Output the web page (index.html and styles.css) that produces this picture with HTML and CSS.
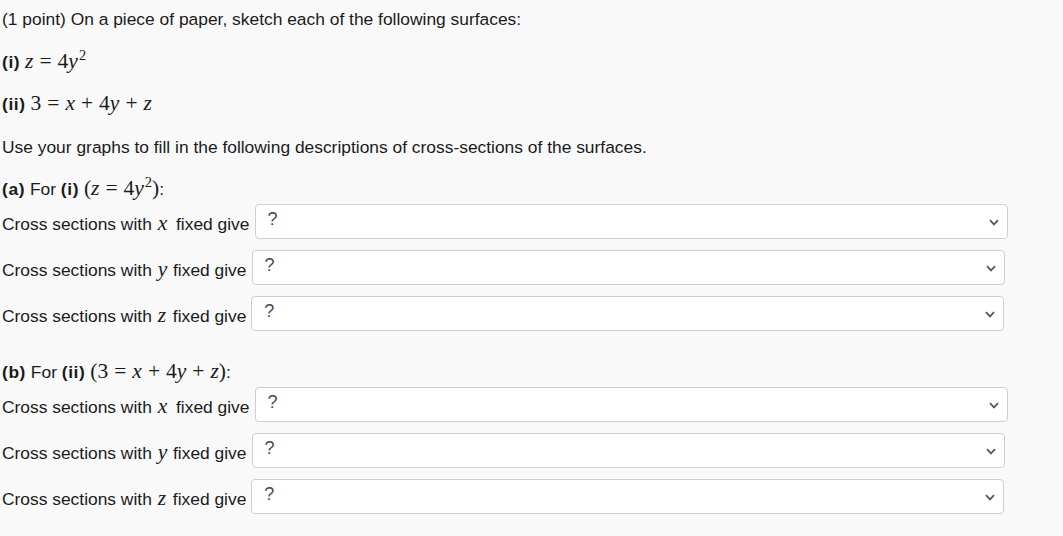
FILE: index.html
```html
<!DOCTYPE html>
<html>
<head>
<meta charset="utf-8">
<link rel="stylesheet" href="styles.css">
</head>
<body>
<div class="page">
  <p class="line">(1 point) On a piece of paper, sketch each of the following surfaces:</p>
  <p class="line"><b>(i)</b> <span class="m"><i>z</i><span class="op">=</span>4<i>y</i><sup>2</sup></span></p>
  <p class="line"><b>(ii)</b> <span class="m">3<span class="op">=</span><i>x</i><span class="op">+</span>4<i>y</i><span class="op">+</span><i>z</i></span></p>
  <p class="line">Use your graphs to fill in the following descriptions of cross-sections of the surfaces.</p>

  <p class="line head"><b>(a)</b> For <b>(i)</b> <span class="m">(<i>z</i><span class="op">=</span>4<i>y</i><sup>2</sup>)</span>:</p>
  <div class="row"><span class="lbl">Cross sections with <span class="m var"><i class="vx">x</i></span> fixed give</span><div class="sel"><span class="q">?</span><svg class="chev" width="10" height="7" viewBox="0 0 10 7"><path d="M1 1.2 L5 5.4 L9 1.2" fill="none" stroke="#555" stroke-width="1.7"/></svg></div></div>
  <div class="row"><span class="lbl">Cross sections with <span class="m var"><i>y</i></span> fixed give</span><div class="sel"><span class="q">?</span><svg class="chev" width="10" height="7" viewBox="0 0 10 7"><path d="M1 1.2 L5 5.4 L9 1.2" fill="none" stroke="#555" stroke-width="1.7"/></svg></div></div>
  <div class="row last"><span class="lbl">Cross sections with <span class="m var"><i class="vz">z</i></span> fixed give</span><div class="sel"><span class="q">?</span><svg class="chev" width="10" height="7" viewBox="0 0 10 7"><path d="M1 1.2 L5 5.4 L9 1.2" fill="none" stroke="#555" stroke-width="1.7"/></svg></div></div>

  <p class="line head"><b>(b)</b> For <b>(ii)</b> <span class="m">(3<span class="op">=</span><i>x</i><span class="op">+</span>4<i>y</i><span class="op">+</span><i>z</i>)</span>:</p>
  <div class="row"><span class="lbl">Cross sections with <span class="m var"><i class="vx">x</i></span> fixed give</span><div class="sel"><span class="q">?</span><svg class="chev" width="10" height="7" viewBox="0 0 10 7"><path d="M1 1.2 L5 5.4 L9 1.2" fill="none" stroke="#555" stroke-width="1.7"/></svg></div></div>
  <div class="row"><span class="lbl">Cross sections with <span class="m var"><i>y</i></span> fixed give</span><div class="sel"><span class="q">?</span><svg class="chev" width="10" height="7" viewBox="0 0 10 7"><path d="M1 1.2 L5 5.4 L9 1.2" fill="none" stroke="#555" stroke-width="1.7"/></svg></div></div>
  <div class="row"><span class="lbl">Cross sections with <span class="m var"><i class="vz">z</i></span> fixed give</span><div class="sel"><span class="q">?</span><svg class="chev" width="10" height="7" viewBox="0 0 10 7"><path d="M1 1.2 L5 5.4 L9 1.2" fill="none" stroke="#555" stroke-width="1.7"/></svg></div></div>
</div>
</body>
</html>
```
FILE: styles.css
```css
html, body {
  margin: 0;
  padding: 0;
  background: #f9f9f9;
}
body {
  font-family: "Liberation Sans", Arial, sans-serif;
  font-size: 17.4px;
  color: #1b1b1b;
}
.page {
  padding: 7px 0 0 2px;
}
.line {
  margin: 0 0 18.5px 0;
  line-height: 24px;
  height: 24px;
  white-space: nowrap;
}
.line.head {
  margin-bottom: 3px;
}
b {
  font-weight: bold;
  letter-spacing: 0.6px;
}
.m {
  font-family: "Liberation Serif", "Times New Roman", serif;
  font-size: 21.5px;
  line-height: 1;
}
.m i { font-style: italic; }
.m sup {
  font-size: 14.5px;
  vertical-align: 8px;
  line-height: 0;
  padding-left: 1px;
}
.op {
  padding: 0 6px;
}
.var {
  margin: 0 1px;
}
.vx {
  padding-right: 3px;
}
.vz {
  padding-right: 1px;
}
.row {
  display: flex;
  align-items: center;
  gap: 5px;
  height: 35px;
  margin-bottom: 11px;
}
.row.last {
  margin-bottom: 29px;
}
.lbl {
  line-height: 24px;
  margin-top: 5px;
  white-space: nowrap;
}
.sel {
  box-sizing: border-box;
  width: 753px;
  height: 35px;
  background: #fff;
  border: 1px solid #cfcfcf;
  border-radius: 4px;
  display: flex;
  align-items: center;
  justify-content: space-between;
  padding: 0 8px 0 12px;
}
.q {
  font-size: 18px;
  color: #4a4a4a;
  margin-top: -4px;
}
.chev {
  display: block;
  margin-top: 2px;
}
```
